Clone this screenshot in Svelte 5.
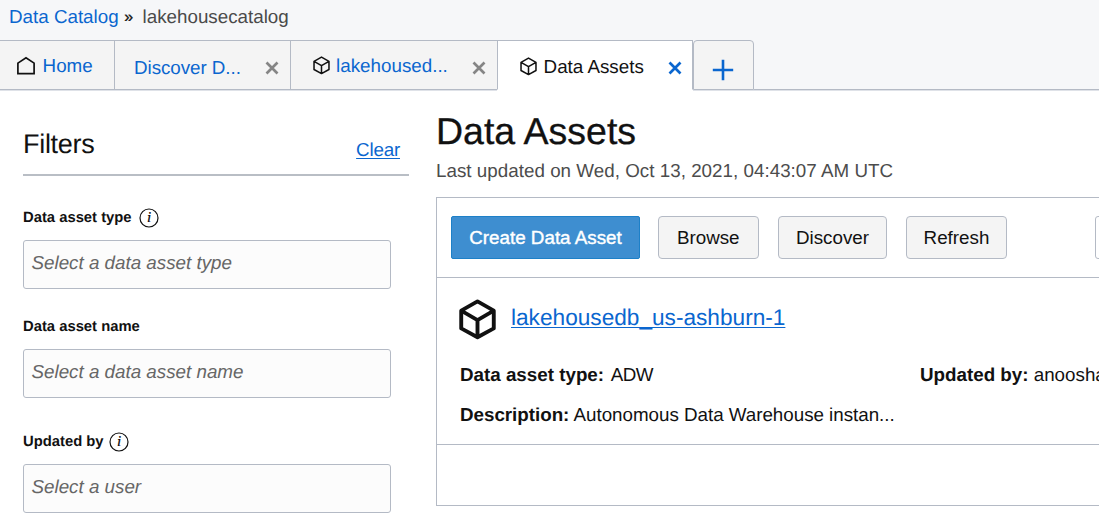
<script>
  const filters = [
    { label: 'Data asset type', placeholder: 'Select a data asset type', info: true },
    { label: 'Data asset name', placeholder: 'Select a data asset name', info: false },
    { label: 'Updated by', placeholder: 'Select a user', info: true }
  ];
</script>

{#snippet cube(size, stroke)}
  <svg class="cube" width={size} height={size * 1.1} viewBox="0 0 20 22" fill="none" stroke="currentColor" stroke-width={stroke} stroke-linejoin="round">
    <path d="M10 1.3 18.8 6.3V15.9L10 20.7 1.2 15.9V6.3Z M1.2 6.3 10 11.4 18.8 6.3 M10 11.4V20.7" />
  </svg>
{/snippet}

{#snippet cross()}
  <svg class="cross" width="14" height="14" viewBox="0 0 14 14" fill="none" stroke="currentColor" stroke-width="2.7">
    <path d="M1.5 1.5 12.5 12.5M12.5 1.5 1.5 12.5" />
  </svg>
{/snippet}

<div class="page">
  <nav class="crumbs">
    <a href="#catalog">Data Catalog</a><span class="sep">»</span><span class="current">lakehousecatalog</span>
  </nav>

  <div class="tabs">
    <div class="tab home">
      <svg width="20" height="20" viewBox="0 0 20 20" fill="none" stroke="#111" stroke-width="1.7"><path d="M1.9 17.6V7.1L10 1.8l8.1 5.3v10.5Z" /></svg>
      <a href="#home">Home</a>
    </div>
    <div class="tab discover"><a href="#discover">Discover D...</a>{@render cross()}</div>
    <div class="tab lake">{@render cube(17, 1.8)}<a href="#lake">lakehoused...</a>{@render cross()}</div>
    <div class="tab active">{@render cube(17, 1.8)}<span>Data Assets</span>{@render cross()}</div>
    <div class="tab add">
      <svg width="22" height="22" viewBox="0 0 22 22" stroke="#0a66cf" stroke-width="2.6"><path d="M11 .8V21.2M.8 11H21.2" /></svg>
    </div>
    <div class="rest"></div>
  </div>

  <div class="body">
    <aside>
      <div class="fhead"><h2>Filters</h2><a href="#clear">Clear</a></div>
      {#each filters as f, i}
        <div class="field f{i}">
          <div class="label">
            <span>{f.label}</span>
            {#if f.info}
              <svg width="20" height="20" viewBox="0 0 20 20"><circle cx="10" cy="10" r="9" fill="none" stroke="#111" stroke-width="1.2" /><text x="10" y="14.3" text-anchor="middle">i</text></svg>
            {/if}
          </div>
          <div class="input">{f.placeholder}</div>
        </div>
      {/each}
    </aside>

    <main>
      <h1>Data Assets</h1>
      <p class="updated">Last updated on Wed, Oct 13, 2021, 04:43:07 AM UTC</p>
      <section>
        <div class="toolbar">
          <button class="primary"><span>Create Data Asset</span></button>
          <button class="browse">Browse</button>
          <button class="disc">Discover</button>
          <button class="refresh">Refresh</button>
          <div class="search"></div>
        </div>
        <div class="item">
          <div class="title">{@render cube(37, 2.1)}<a href="#asset">lakehousedb_us-ashburn-1</a></div>
          <div class="details">
            <div class="d1"><b>Data asset type:</b> <span class="adw">ADW</span></div>
            <div class="d2"><b>Updated by:</b> <span>anoosha</span></div>
            <div class="d3"><b>Description:</b> <span>Autonomous Data Warehouse instan...</span></div>
          </div>
        </div>
        <div class="foot"></div>
      </section>
    </main>
  </div>
</div>

<style>
  :global(body) { margin: 0; overflow: hidden; background: #fff; }
  * { box-sizing: border-box; }
  .page { width: 1099px; height: 525px; overflow: hidden; font-family: "Liberation Sans", Arial, sans-serif; font-size: 18.8px; color: #111; white-space: nowrap; text-rendering: geometricPrecision; }
  a { color: #0a66cf; text-decoration: none; }
  svg { display: block; flex: none; }
  .crumbs { height: 40px; background: #f6f7f9; display: flex; padding-left: 9px; line-height: 33px; }
  .sep { font-size: 16px; margin: 0 9.5px 0 5.5px; line-height: 35px; -webkit-text-stroke: .3px #111; }
  .current { color: #4a4a4a; }
  .tabs { height: 51px; display: flex; background: #f6f7f9; box-shadow: inset 0 -1px #fff; }
  .tab { display: flex; height: 50px; background: #f4f4f4; border-top: 1px solid #b4bac5; border-bottom: 1px solid #b4bac5; border-right: 1px solid #b4bac5; box-shadow: 0 1px #dfe2e8; }
  .home { width: 114.5px; padding-left: 17px; line-height: 50px; }
  .home svg { margin: 15px 6px 0 -1px; }
  .discover { width: 176px; padding-left: 19.5px; line-height: 54px; justify-content: space-between; padding-right: 11px; }
  .discover a { letter-spacing: -.05px; }
  .cross { margin-top: 20px; color: #858585; }
  .lake { width: 206px; padding: 0 11px 0 22px; line-height: 50px; border-right: 0; }
  .cube { margin: 15px 6px 0 0; }
  .lake .cross { margin: 20px 0 0 auto; }
  .home a, .lake a, .active span { padding-left: .6px; }
  .active { width: 196.5px; border-left: 1px solid #b4bac5; border-bottom-color: #fff; box-shadow: none; background: #fff; line-height: 52px; padding: 0 10px 0 22.5px; }
  .active .cube { margin-top: 16px; }
  .active .cross { margin-left: auto; color: #0a66cf; }
  .add { width: 60.5px; border-left: 1px solid #b4bac5; border-radius: 4px 4px 0 0; justify-content: center; padding-top: 17.5px; }
  .rest { flex: 1; height: 50px; border-bottom: 1px solid #b4bac5; box-shadow: 0 1px #dfe2e8; }
  .body { display: flex; height: 434px; }
  aside { width: 436px; flex: none; padding-left: 23px; }
  .fhead { width: 386px; height: 85px; border-bottom: 2px solid #b9bec5; display: flex; justify-content: space-between; padding-right: 9px; }
  h2 { margin: 0; font-size: 27px; letter-spacing: -.3px; font-weight: 400; line-height: 106px; }
  .fhead a { line-height: 117px; letter-spacing: -.2px; text-decoration: underline; text-decoration-thickness: 1px; text-underline-offset: 2px; }
  .field { width: 368px; }
  .label { display: flex; height: 20px; line-height: 20.5px; font-size: 14.8px; font-weight: bold; margin-bottom: 12px; }
  .label svg { margin-left: 7px; }
  .f2 .label svg { margin-left: 5.5px; }
  .label text { font: italic 15px "Liberation Serif", serif; stroke: #111; stroke-width: .2px; }
  .input { height: 49px; border: 1px solid #b4bac5; border-radius: 3px; background: #fcfcfc; color: #666; font-style: italic; padding-left: 7.5px; line-height: 44px; }
  .f0 { margin-top: 32px; }
  .f1 { margin-top: 28px; }
  .f2 { margin-top: 34px; }
  main { flex: 1; min-width: 0; }
  h1 { margin: 0; font-size: 37.5px; font-weight: 400; line-height: 50px; padding-top: 15px; height: 65px; -webkit-text-stroke: .3px #111; }
  .updated { margin: 0; line-height: 30px; height: 41px; color: #4c4c4c; letter-spacing: .025px; }
  section { width: 680px; border: 1px solid #b4bac5; height: 309px; }
  .toolbar { display: flex; height: 80px; padding: 18px 0 0 14px; border-bottom: 1px solid #b4bac5; }
  button { height: 43px; font: inherit; border: 1px solid #b4bac5; border-radius: 4px; background: #f4f4f4; color: #111; padding: 0; flex: none; }
  .primary { width: 189px; background: #3e8ed0; border-color: #1d80c8; border-radius: 2px; color: #fff; -webkit-text-stroke: .4px #fff; margin-right: 17.5px; }
  .browse { width: 101.5px; margin-right: 19px; }
  .disc { width: 109px; margin-right: 19px; }
  .refresh { width: 101px; margin-right: 88px; }
  .search { width: 100px; height: 43px; border: 1px solid #b4bac5; border-radius: 3px; flex: none; }
  .item { height: 167px; border-bottom: 1px solid #b4bac5; padding-left: 23px; }
  .title { display: flex; height: 77px; font-size: 22.65px; line-height: 79px; }
  .title .cube { margin: 21px 15px 0 -1px; }
  .title a { text-decoration: underline; text-decoration-thickness: 1px; text-underline-offset: 2px; text-decoration-skip-ink: none; }
  .details { display: grid; grid-template-columns: 460px 1fr; grid-template-rows: 40px 40px; line-height: 40px; }
  .adw { padding-left: 1.5px; letter-spacing: -.5px; }
  .d3 { letter-spacing: -.02px; }
</style>
